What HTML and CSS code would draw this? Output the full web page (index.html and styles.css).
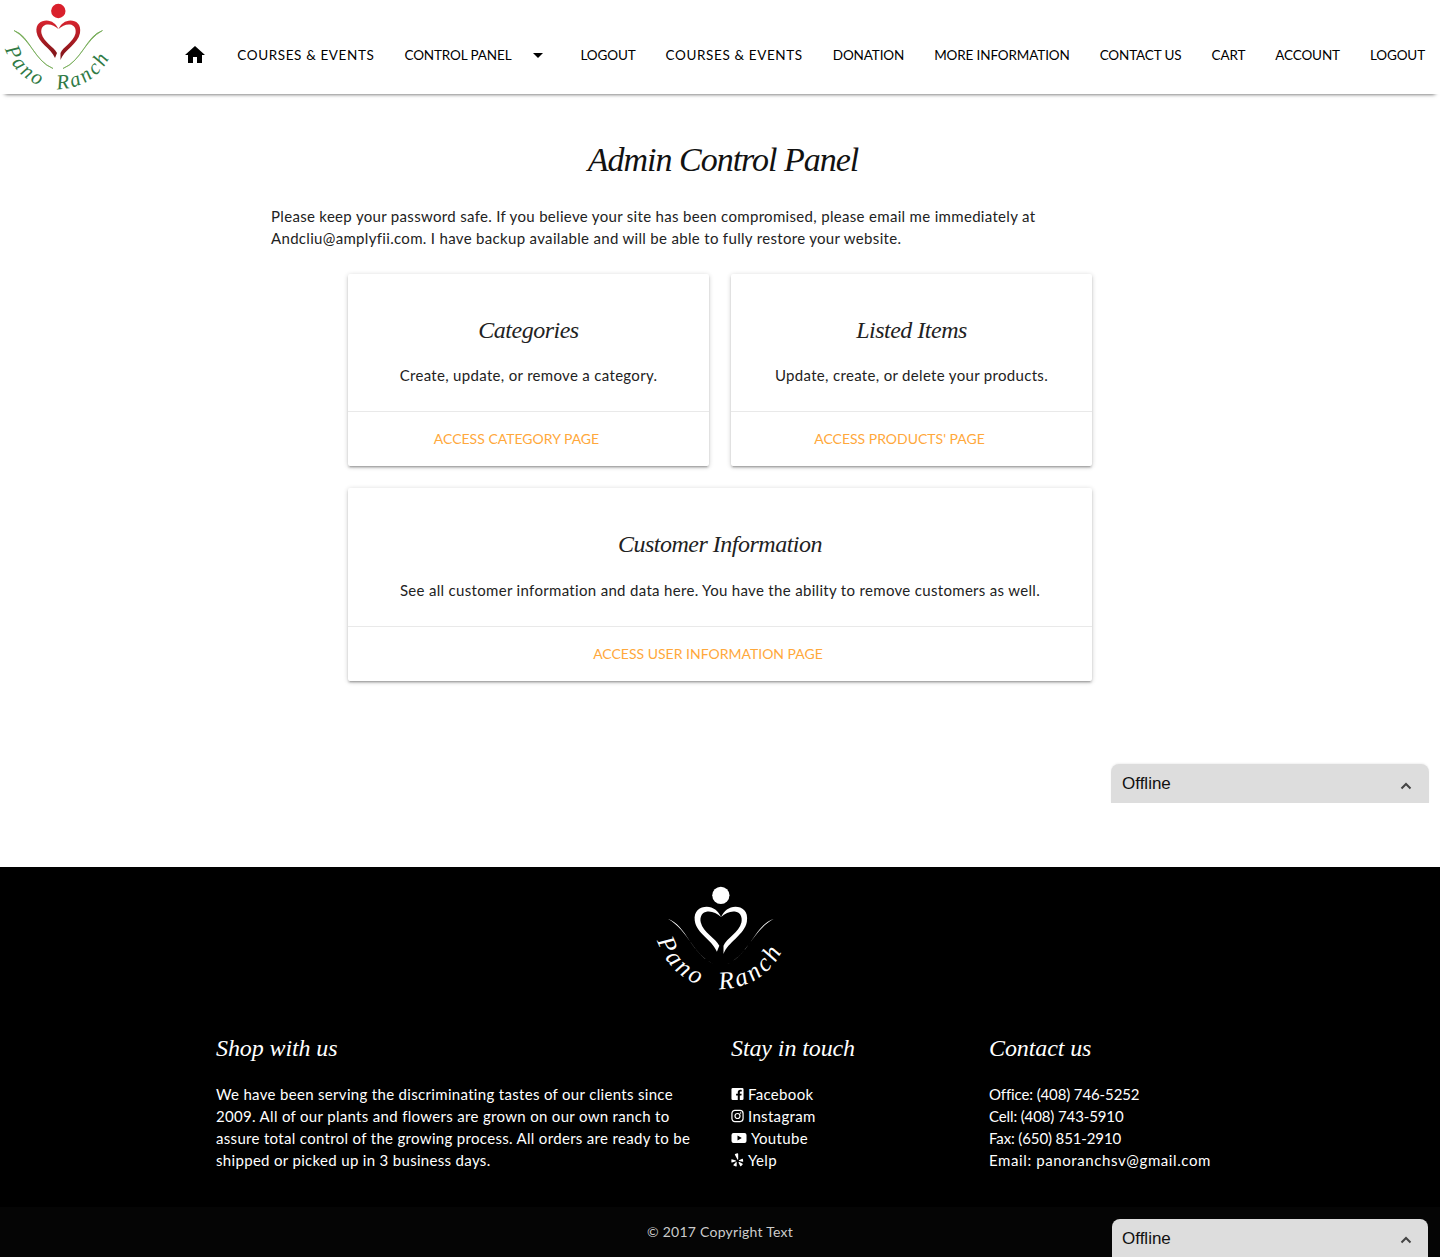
FILE: index.html

```html
<!DOCTYPE html>
<html lang="en">
<head>
  <meta charset="UTF-8" />
  <meta name="viewport" content="width=device-width, initial-scale=1.0" />
  <title>Pano Ranch - Admin Control Panel</title>
  <link rel="stylesheet" href="styles.css">
</head>
<body>
  <svg class="defs" width="0" height="0" aria-hidden="true">
    <defs>
      <linearGradient id="heartRed" x1="0" y1="0" x2="0" y2="1">
        <stop offset="0" stop-color="#d8232f" />
        <stop offset="1" stop-color="#7c1518" />
      </linearGradient>
      <path id="logoArc" d="M3 33 A56 56 0 0 0 115 33" />
    </defs>
  </svg>

  <nav class="navbar">
    <a class="brand" href="#">
      <svg class="logo" viewBox="0 0 116 94">
        <circle class="logo-dot" cx="58.3" cy="11" r="7.2" />
        <path class="logo-heart" d="M55 58C51 48 38 43 36.500 32C35.500 24 41 20.500 46.500 20.500C52 20.500 56 24 58.500 29C55 26 51 24 47 24.500C43 25 40.500 28.500 41.500 33.500C43.500 42 54 47 57 53Z" />
        <path class="logo-heart" d="M60.500 60C64 50 78 44 80 33C81.500 24 76 20.500 70.500 20.500C65 20.500 61 24 58.500 29C62 26 66 24 70 24.500C74 25 76.500 28.500 75.500 33.500C73.500 42 63 47 60.500 53Z" />
        <path class="logo-leaf" d="M14 30.500C30 36 33 60 53 68.500C36 62 31 40 14 30.500Z" />
        <path class="logo-leaf" d="M102.500 30.500C86 36 83 60 63 68.500C80 62 85 40 102.500 30.500Z" />
        <text class="logo-text"><textPath href="#logoArc" startOffset="16">Pano  Ranch</textPath></text>
      </svg>
    </a>
    <ul class="nav-links">
      <li>
        <a href="#">
          <svg class="icon" viewBox="0 0 24 24"><path d="M10 20v-6h4v6h5v-8h3L12 3 2 12h3v8z" /></svg>
        </a>
      </li>
      <li><a class="nav-wide" href="#">Courses &amp; Events</a></li>
      <li>
        <a class="has-caret" href="#">Control Panel
          <svg class="icon" viewBox="0 0 24 24"><path d="M7 10l5 5 5-5z" /></svg>
        </a>
      </li>
      <li><a href="#">Logout</a></li>
      <li><a class="nav-wide" href="#">Courses &amp; Events</a></li>
      <li><a href="#">Donation</a></li>
      <li><a href="#">More Information</a></li>
      <li><a href="#">Contact Us</a></li>
      <li><a href="#">Cart</a></li>
      <li><a href="#">Account</a></li>
      <li><a href="#">Logout</a></li>
    </ul>
  </nav>

  <main class="main">
    <h1 class="page-title">Admin Control Panel</h1>
    <p class="intro">Please keep your password safe. If you believe your site has been compromised, please email me immediately at Andcliu@amplyfii.com. I have backup available and will be able to fully restore your website.</p>

    <div class="cards">
      <div class="card">
        <div class="card-body">
          <h2 class="card-title">Categories</h2>
          <p>Create, update, or remove a category.</p>
        </div>
        <div class="card-action"><a href="#">Access Category Page</a></div>
      </div>
      <div class="card">
        <div class="card-body">
          <h2 class="card-title">Listed Items</h2>
          <p>Update, create, or delete your products.</p>
        </div>
        <div class="card-action"><a href="#">Access Products' Page</a></div>
      </div>
      <div class="card card-wide">
        <div class="card-body">
          <h2 class="card-title">Customer Information</h2>
          <p>See all customer information and data here. You have the ability to remove customers as well.</p>
        </div>
        <div class="card-action"><a href="#">Access User Information Page</a></div>
      </div>
    </div>
  </main>

  <footer class="footer">
    <svg class="logo logo-white" viewBox="0 0 116 94">
      <circle class="logo-dot" cx="58.3" cy="11" r="7.2" />
      <path class="logo-heart" d="M55 58C51 48 38 43 36.500 32C35.500 24 41 20.500 46.500 20.500C52 20.500 56 24 58.500 29C55 26 51 24 47 24.500C43 25 40.500 28.500 41.500 33.500C43.500 42 54 47 57 53Z" />
      <path class="logo-heart" d="M60.500 60C64 50 78 44 80 33C81.500 24 76 20.500 70.500 20.500C65 20.500 61 24 58.500 29C62 26 66 24 70 24.500C74 25 76.500 28.500 75.500 33.500C73.500 42 63 47 60.500 53Z" />
      <path class="logo-leaf" d="M14 30.500C30 36 33 60 53 68.500C36 62 31 40 14 30.500Z" />
      <path class="logo-leaf" d="M102.500 30.500C86 36 83 60 63 68.500C80 62 85 40 102.500 30.500Z" />
      <text class="logo-text"><textPath href="#logoArc" startOffset="16">Pano  Ranch</textPath></text>
    </svg>

    <div class="footer-cols">
      <div>
        <h3 class="footer-title">Shop with us</h3>
        <p class="shop-text">We have been serving the discriminating tastes of our clients since 2009. All of our plants and flowers are grown on our own ranch to assure total control of the growing process. All orders are ready to be shipped or picked up in 3 business days.</p>
      </div>
      <div>
        <h3 class="footer-title">Stay in touch</h3>
        <ul class="social">
          <li>
            <svg class="social-icon" viewBox="0 0 14 14"><path d="M2 .5h10A1.500 1.500 0 0 1 13.500 2v10a1.500 1.500 0 0 1-1.500 1.500H9.500V8.600h1.700l.3-2H9.500V5.400c0-.6.300-1 1-1h1.100V2.600c-.4-.1-1-.1-1.600-.1-1.700 0-2.700 1-2.700 2.700v1.400H5.500v2h1.800v4.900H2A1.500 1.500 0 0 1 .5 12V2A1.500 1.500 0 0 1 2 .5z" /></svg>
            Facebook
          </li>
          <li>
            <svg class="social-icon" viewBox="0 0 14 14"><rect class="ig" x="1" y="1" width="12" height="12" rx="3.200" /><circle class="ig" cx="7" cy="7" r="2.700" /><circle cx="10.300" cy="3.700" r=".8" /></svg>
            Instagram
          </li>
          <li>
            <svg class="social-icon yt" viewBox="0 0 16 14"><path fill-rule="evenodd" d="M2.500 2h11A2 2 0 0 1 15.500 4v6a2 2 0 0 1-2 2h-11a2 2 0 0 1-2-2V4a2 2 0 0 1 2-2zM6.500 4.500v5L10.800 7z" /></svg>
            Youtube
          </li>
          <li>
            <svg class="social-icon" viewBox="0 0 13 14"><path d="M4.200 1L6.200 .2Q7.200 0 7.200 1L7.200 6.300Q7 7 6.400 6.500L3.900 1.800Q3.800 1.200 4.200 1Z" /><path d="M.8 6.200L4.900 7.400Q5.600 7.800 5 8.300L1 9.600Q.4 9.600 .4 9L.4 6.600Q.4 6.200 .8 6.200Z" /><path d="M5.700 9.200L5.700 13Q5.500 13.600 5 13.400L2.600 12.600Q2.100 12.200 2.500 11.800L5 9Q5.600 8.600 5.700 9.200Z" /><path d="M7.600 9.200Q8 8.700 8.500 9L11.600 10.800Q12 11.200 11.600 11.600L10 13.200Q9.500 13.500 9.200 13L7.500 9.800Q7.400 9.500 7.600 9.200Z" /><path d="M8 7.200L11.200 5.700Q11.800 5.600 11.900 6.100L12.200 8.400Q12.100 8.900 11.600 8.800L8.200 8.100Q7.500 7.700 8 7.200Z" /></svg>
            Yelp
          </li>
        </ul>
      </div>
      <div>
        <h3 class="footer-title">Contact us</h3>
        <ul class="contact">
          <li>Office: (408) 746-5252</li>
          <li>Cell: (408) 743-5910</li>
          <li>Fax: (650) 851-2910</li>
          <li class="contact-email">Email: panoranchsv@gmail.com</li>
        </ul>
      </div>
    </div>

    <div class="copyright">© 2017 Copyright Text</div>
  </footer>

  <div class="chat chat-upper">
    Offline
    <svg class="chat-arrow" viewBox="0 0 12 8"><path d="M1.500 6.500L6 2l4.500 4.500" /></svg>
  </div>
  <div class="chat chat-lower">
    Offline
    <svg class="chat-arrow" viewBox="0 0 12 8"><path d="M1.500 6.500L6 2l4.500 4.500" /></svg>
  </div>
</body>
</html>
```

FILE: styles.css

```css
* { box-sizing: border-box; }
body { margin: 0; font-family: "Lato", Arial, sans-serif; font-size: 15px; line-height: 22px; letter-spacing: 0.32px; color: #222; background: #fff; position: relative; }
ul { list-style: none; margin: 0; padding: 0; }
a { color: inherit; text-decoration: none; }
p { margin: 0; }
.defs { position: absolute; }

.navbar { height: 94px; display: flex; justify-content: space-between; background: #fff; box-shadow: 0 5px 4px -5px rgba(0,0,0,0.75); position: relative; }
.brand { display: block; width: 116px; height: 94px; }
.logo { display: block; width: 116px; height: 94px; }
.logo-dot { fill: #d9202c; }
.logo-heart { fill: url(#heartRed); }
.logo-leaf { fill: #6fa84f; stroke: #6fa84f; stroke-width: 0.7; }
.logo-text { font-family: "Liberation Serif", serif; font-style: italic; font-size: 21px; letter-spacing: 2.5px; fill: #2f7a45; white-space: pre; }
.logo-white { width: 139px; height: 113px; }
.logo-white .logo-dot, .logo-white .logo-heart, .logo-white .logo-leaf, .logo-white .logo-text { fill: #fff; stroke: none; }

.nav-links { display: flex; align-items: center; padding-top: 16px; white-space: nowrap; }
.nav-links a { display: flex; align-items: center; padding: 0 15px; font-size: 13.5px; text-transform: uppercase; color: #000; letter-spacing: -0.13px; }
.nav-links .nav-wide { letter-spacing: 0.62px; }
.icon { display: block; width: 24px; height: 24px; fill: #000; }
.has-caret .icon { margin-left: 15px; }

.main { padding: 44px 0 186px; display: flex; flex-direction: column; align-items: center; }
.page-title { margin: 0 0 23px; font-family: "Liberation Serif", serif; font-style: italic; font-weight: 400; font-size: 34px; line-height: 44px; letter-spacing: -1px; color: #111; transform: translateX(3px); }
.intro { width: 898px; margin-bottom: 25px; }

.cards { width: 744px; display: grid; grid-template-columns: 361px 361px; gap: 22px; }
.card { background: #fff; border-radius: 2px; box-shadow: 0 2px 2px 0 rgba(0,0,0,0.14), 0 3px 1px -2px rgba(0,0,0,0.12), 0 1px 5px 0 rgba(0,0,0,0.2); }
.card-wide { grid-column: 1 / 3; }
.card-body { height: 138px; padding-top: 36px; text-align: center; border-bottom: 1px solid #e9e9e9; }
.card-wide .card-body { height: 139px; }
.card-title { margin: 0 0 14px; font-family: "Liberation Serif", serif; font-style: italic; font-weight: 400; font-size: 24px; line-height: 40px; letter-spacing: -0.5px; color: #222; }
.card-wide .card-title { margin-bottom: 15px; }
.card-action { height: 54px; padding-right: 24px; display: flex; align-items: center; justify-content: center; font-size: 14px; letter-spacing: 0; text-transform: uppercase; color: #ffa83b; }

.footer { background: #000; color: #fff; padding-top: 15px; height: 390px; display: flex; flex-direction: column; align-items: center; }
.footer-cols { width: 1008px; margin-top: 33px; display: grid; grid-template-columns: 515px 258px 235px; }
.footer-title { margin: 0 0 15px; font-family: "Liberation Serif", serif; font-style: italic; font-weight: 400; font-size: 24px; line-height: 40px; letter-spacing: -0.1px; color: #fff; }
.shop-text { width: 485px; }
.social li { display: flex; align-items: center; gap: 4px; }
.social-icon { display: block; width: 13px; height: 14px; fill: #fff; }
.social-icon.yt { width: 16px; }
.ig { fill: none; stroke: #fff; stroke-width: 1.300; }
.contact li { letter-spacing: -0.12px; }
.contact .contact-email { letter-spacing: 0.6px; }
.copyright { margin-top: auto; width: 100%; height: 50px; background: #050505; display: flex; align-items: center; justify-content: center; font-size: 14px; letter-spacing: 0.25px; color: #ccc; }

/* chat tabs sit over the page */
.chat { position: absolute; display: flex; align-items: center; justify-content: space-between; padding: 1px 16px 0 10px; background: #ddd; border-radius: 8px 8px 0 0; font-family: "Liberation Sans", Arial, sans-serif; font-size: 17px; letter-spacing: 0; color: #111; }
.chat-upper { top: 764px; left: 1111px; width: 318px; height: 39px; padding: 1px 17px 0 11px; box-shadow: 0 -1px 2px rgba(0,0,0,0.06); }
.chat-lower { top: 1219px; left: 1112px; width: 316px; height: 38px; }
.chat-arrow { width: 12px; height: 8px; margin-top: 3px; fill: none; stroke: #444; stroke-width: 2; }
```
